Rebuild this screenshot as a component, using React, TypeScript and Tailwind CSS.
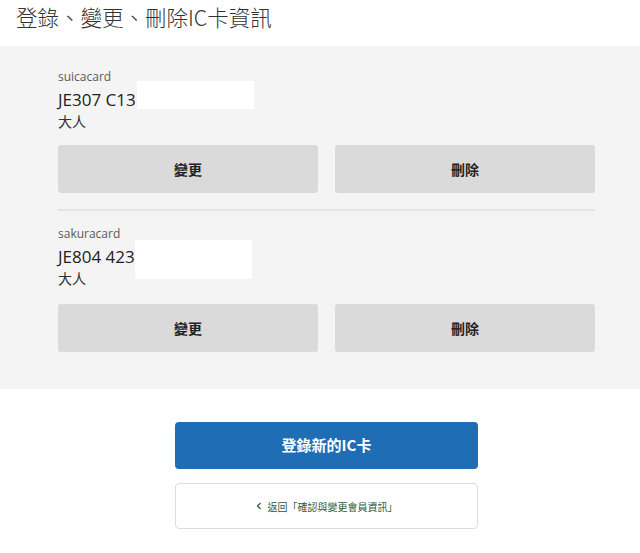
import React from "react";

const CJK = "font-['Noto_Sans_CJK_TC','Noto_Sans',sans-serif]";
const LATIN = "font-['Open_Sans','Noto_Sans_CJK_TC',sans-serif]";

function Card(props: { label: string; number: string; boxCls: string; cls: string }) {
  return (
    <div className={props.cls}>
      <div className={"text-[12px] leading-[13px] text-[#5a5a5a] " + LATIN}>{props.label}</div>
      <div className={"relative mt-[5px] text-[17px] leading-[24px] text-[#222] " + LATIN}>
        {props.number}
        <div className={"absolute w-[117px] bg-white " + props.boxCls} />
      </div>
      <div className={"text-[14px] leading-[18px] text-[#333] " + CJK}>大人</div>
    </div>
  );
}

function Buttons({ cls }: { cls: string }) {
  const b =
    "flex h-[48px] w-[260px] items-center justify-center rounded-[3px] bg-[#dadada] text-[14px] font-semibold text-[#222] " +
    CJK;
  return (
    <div className={"flex gap-[17px] " + cls}>
      <button className={b}>變更</button>
      <button className={b}>刪除</button>
    </div>
  );
}

export default function App() {
  return (
    <div className="w-[640px] bg-white">
      <div className={"h-[46px] pl-[16px] pt-[3px] text-[21.5px] font-light leading-[28px] text-[#333] " + CJK}>
        登錄、變更、刪除IC卡資訊
      </div>
      <div className="bg-[#f4f4f4] pb-[37px] pl-[58px] pr-[45px]">
        <Card cls="pt-[24px]" label="suicacard" number="JE307 C13" boxCls="left-[79px] top-[-7px] h-[28px]" />
        <Buttons cls="mt-[15px]" />
        <div className="mt-[16px] h-[2px] w-[537px] bg-[#e4e4e4]" />
        <Card cls="pt-[16px]" label="sakuracard" number="JE804 423" boxCls="left-[77px] top-[-5px] h-[39px]" />
        <Buttons cls="mt-[17px]" />
      </div>
      <div className="ml-[175px] flex w-[303px] flex-col gap-[14px] pt-[33px]">
        <button
          className={
            "flex h-[47px] w-[303px] items-center justify-center rounded-[4px] bg-[#1f6db4] text-[15px] font-bold text-white " +
            CJK
          }
        >
          登錄新的IC卡
        </button>
        <button
          className={
            "flex h-[46px] w-[303px] items-center justify-center gap-[6px] rounded-[4px] border border-[#dcdcdc] bg-white text-[10px] text-[#2d5a3a] " +
            CJK
          }
        >
          <svg width="6" height="8" viewBox="0 0 6 8" fill="none">
            <path d="M4.5 1 L1.5 4 L4.5 7" stroke="#2d5a3a" strokeWidth="1.2" />
          </svg>
          <span>返回「確認與變更會員資訊」</span>
        </button>
      </div>
    </div>
  );
}
